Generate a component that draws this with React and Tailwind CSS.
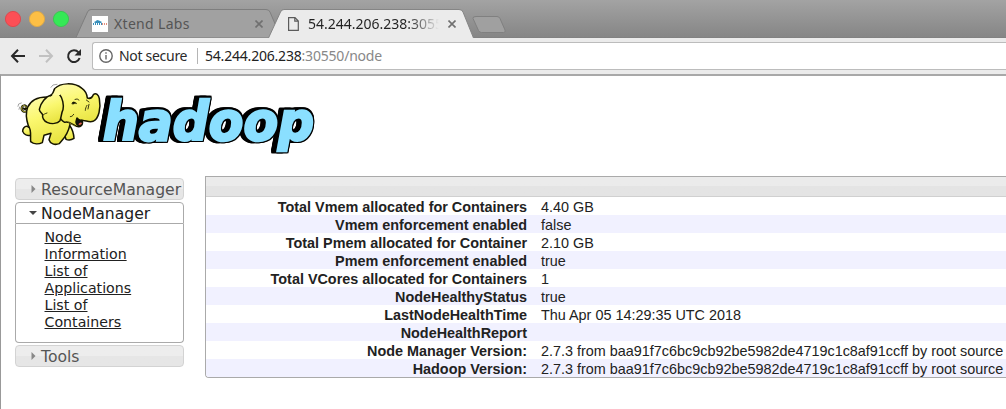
import React from "react";

const rows = [
  ["Total Vmem allocated for Containers", "4.40 GB"],
  ["Vmem enforcement enabled", "false"],
  ["Total Pmem allocated for Container", "2.10 GB"],
  ["Pmem enforcement enabled", "true"],
  ["Total VCores allocated for Containers", "1"],
  ["NodeHealthyStatus", "true"],
  ["LastNodeHealthTime", "Thu Apr 05 14:29:35 UTC 2018"],
  ["NodeHealthReport", ""],
  ["Node Manager Version:", "2.7.3 from baa91f7c6bc9cb92be5982de4719c1c8af91ccff by root source"],
  ["Hadoop Version:", "2.7.3 from baa91f7c6bc9cb92be5982de4719c1c8af91ccff by root source"],
];

function Close() {
  return (
    <svg className="h-[8px] w-[8px] shrink-0" viewBox="0 0 8 8" stroke="#707070" strokeWidth="1.6">
      <path d="M0.5 0.5 7.5 7.5M7.5 0.5 0.5 7.5" />
    </svg>
  );
}

function TabStrip() {
  return (
    <div className="relative flex h-[38px] bg-linear-to-b from-[#a3a3a3] to-[#858585]">
      <svg className="absolute inset-0" width="1006" height="38" viewBox="0 0 1006 38">
        <circle cx="13" cy="19" r="7.6" fill="#fc4f56" stroke="#df484e" />
        <circle cx="37" cy="19" r="7.6" fill="#fdbf45" stroke="#dca94a" />
        <circle cx="61" cy="19" r="7.6" fill="#35e956" stroke="#3cc653" />
        <path d="M76 37.5 87.5 12Q88.600 9.500 91 9.500H266Q269 9.500 270 12L281 38" fill="#a1a1a1" stroke="#7e7e7e" />
        <path d="M0 37.500H1006" stroke="#7d7d7d" strokeOpacity=".5" />
        <path d="M268.500 38 280.500 12Q281.500 9.500 284 9.500H459Q462 9.500 463 12L473.500 38" fill="#ebebeb" stroke="#858585" />
        <path d="M476 16.500H497Q499 16.500 500 18.500L505 30Q506 32.500 503.500 32.500H481.500Q479.500 32.500 478.500 30.500L473 18.500Q472.500 16.500 476 16.500Z" fill="#a0a0a0" stroke="#808080" />
      </svg>
      <div className="relative flex w-[263px] items-center pt-[10px] pl-[92px]">
        <svg className="h-4 w-4 shrink-0" viewBox="0 0 16 16">
          <path fill="#fff" d="M0 0h16v16H0z" />
          <path fill="#388fbb" d="M2 6 4 5 5 4 7 4.500 8 5 10 6 9 7H3ZM1 7h1v2H1zM3 7h1v2H3zM5 7h1v2H5zM7 7h1v2H7zM9 7h1v2H9z" />
          <path fill="#e48f7c" d="M10 7h1v2h-1zM12 7h1v2h-1zM14 7h1v2h-1z" />
        </svg>
        <span className="ml-[6px] w-[141px] text-[14px] leading-[18px] tracking-[0.32px] text-[#555]">Xtend Labs</span>
        <Close />
      </div>
      <div className="relative flex w-[200px] items-center pt-[10px] pl-[25px]">
        <svg className="h-[14px] w-[11px] shrink-0" viewBox="0 0 11 14" fill="none" stroke="#5b5b5b" strokeWidth="1.2">
          <path d="M.6.6H7L10.300 4V13.400H.6ZM6.800.8V4.200H10" />
        </svg>
        <span className="mr-[9px] ml-[9px] w-[131px] overflow-hidden bg-linear-to-r from-[#222] from-75% to-[#ebebeb] bg-clip-text text-[14px] leading-[18px] whitespace-nowrap text-transparent">54.244.206.238:30550</span>
        <Close />
      </div>
    </div>
  );
}

function Toolbar() {
  return (
    <div className="flex h-[36px] items-center bg-[#ebebeb] pl-[10px]">
      <svg className="h-[16px] w-[74px] shrink-0" viewBox="0 0 74 16" fill="none" strokeWidth="2">
        <path stroke="#292929" d="M15 8H2.500M8 1.700 2 8 8 14.300" />
        <path stroke="#c1c1c1" d="M29 8H41.500M36 1.700 42 8 36 14.300" />
        <path stroke="#292929" d="M68.500 4.300A5.900 5.900 0 1 0 69.600 10" />
        <path fill="#292929" d="M71 1V7.500H64.500Z" />
      </svg>
      <div className="ml-2 flex h-[28px] flex-1 items-center rounded-l-[3px] border border-r-0 border-[#bcbcbc] bg-white text-[14px] leading-5 whitespace-nowrap">
        <svg className="ml-[6px] h-[14px] w-[14px] shrink-0" viewBox="0 0 14 14" fill="none" stroke="#666" strokeWidth="1.400">
          <circle cx="7" cy="7" r="6.200" />
          <path d="M7 6V10.500M7 3.300V4.800" />
        </svg>
        <span className="ml-[6px] w-[70px] tracking-[-0.3px] text-[#2a2a2a]">Not secure</span>
        <span className="mr-[7px] ml-[8px] h-4 w-px bg-[#b5b5b5]" />
        <span className="tracking-[-0.2px] text-[#222]">54.244.206.238<span className="text-[#888]">:30550/node</span></span>
      </div>
    </div>
  );
}

function Logo() {
  return (
    <svg className="h-[85px] w-[320px] overflow-visible" viewBox="0 0 320 85">
      <defs>
        <linearGradient id="skin" x1="0" y1="0" x2="0.300" y2="1">
          <stop offset="0" stopColor="#fffcae" />
          <stop offset=".5" stopColor="#faf76e" />
          <stop offset="1" stopColor="#eae545" />
        </linearGradient>
      </defs>
      <text
        x="93" y="63.500" textLength="211" lengthAdjust="spacingAndGlyphs"
        className="fill-[#8adfff] stroke-[#8adfff] font-['DejaVu_Sans'] text-[54px] font-bold italic [filter:drop-shadow(1.5px_0_#000)_drop-shadow(-5px_0_#000)_drop-shadow(0_1.5px_#000)_drop-shadow(0_-1.5px_#000)] [stroke-linejoin:miter] [stroke-width:2.5px]"
      >hadoop</text>
      <g transform="scale(.33333)" fill="url(#skin)" stroke="#161500" strokeWidth="4.500" strokeLinejoin="round" strokeLinecap="round">
        <path d="M52 104C43 111 33 105 35 95C37 86 48 86 49 94C50 99 43 101 41 97" fill="none" strokeWidth="6" />
        <path d="M52 104C43 111 33 105 35 95C37 86 48 86 49 94" fill="none" stroke="#eee84e" strokeWidth="2" />
        <path d="M52 151C43 150 38 158 38 166C42 176 52 181 64 177L70 162Z" />
        <path d="M157 156 168 190C176 193 186 191 192 187C191 173 188 161 180 150Z" />
        <path d="M120 63C87 61 62 72 53 94C46 112 51 137 55 149C66 164 60 180 62 197C71 205 86 205 97 200L102 178 123 172 117 191C121 204 134 208 148 203C158 190 173 180 180 145L182 85Z" />
        <path d="M134 38C151 20 192 18 216 37C226 44 231 56 232 66C240 69 247 64 250 56C258 50 266 56 268 68C273 95 267 129 249 136C236 140 225 132 217 134C220 148 210 155 200 151C184 144 176 134 164 139C148 132 137 105 129 62Z" />
        <path d="M125 57C108 60 91 81 88 100C88 108 96 111 98 117C96 124 102 136 111 139C126 145 142 143 150 134C154 125 154 110 159 101C162 87 158 66 148 55" />
        <path d="M125 57 134 38 150 35 151 57Z" stroke="none" fill="#fffba4" />
        <path d="M122 59Q129 53 134 38" fill="none" />
        <path d="M201 126C199 135 193 140 204 148C212 153 220 146 216 132C210 134 205 131 201 126Z" fill="#111" />
        <path d="M208 142Q213 137 216 142Q211 150 205 145Z" fill="#e0604e" stroke="none" />
        <path d="M185 82Q189 75 196 79L201 83Q193 81 189 85Z" fill="#161500" strokeWidth="1" />
        <path d="M195 70Q202 66 207 72M229 72 237 78M231 88C228 93 226 98 226 103M237 85 234 99" fill="none" strokeWidth="2.500" />
        <path d="M191 115C188 120 185 122 181 122M111 111C105 113 101 115 98 118" fill="none" strokeWidth="2.500" />
        <path d="M123 34 129 27 141 25M24 91 26 84 34 81M27 100 29 93" fill="none" stroke="#777" strokeWidth="2" />
        <path d="M174 137C181 143 188 147 196 151" fill="none" stroke="#a49b20" strokeWidth="2" />
      </g>
    </svg>
  );
}

function MenuHeader({ label, open }) {
  const look = open
    ? "rounded-t-[4px] border-[#aaa] bg-white text-[#212121]"
    : "rounded-[4px] border-[#d3d3d3] bg-linear-to-b from-[#ededed] from-50% to-[#e6e6e6] to-50% text-[#555]";
  return (
    <div className={"flex h-[22px] items-center border pl-[12.500px] text-[15.640px] leading-5 whitespace-nowrap " + look}>
      <svg className="mr-[4.500px] h-2 w-2 shrink-0" viewBox="0 0 8 8" fill={open ? "#454545" : "#888"}>
        <path d={open ? "M0 2H8L4 6Z" : "M2.500 0V8L6.500 4Z"} />
      </svg>
      <span className="pt-[2px]">{label}</span>
    </div>
  );
}

function Sidebar() {
  return (
    <nav className="flex w-[169px] shrink-0 flex-col gap-[2px] pt-[2px] font-['DejaVu_Sans',sans-serif]">
      <MenuHeader label="ResourceManager" />
      <div>
        <MenuHeader label="NodeManager" open />
        <ul className="h-[119px] rounded-b-[4px] border border-t-0 border-[#aaa] pt-[5px] pl-[28.500px] text-[14.200px] leading-[17px] text-[#212121]">
          <li className="w-[95px] underline">Node Information</li>
          <li className="w-[95px] underline">List of Applications</li>
          <li className="w-[95px] underline">List of Containers</li>
        </ul>
      </div>
      <MenuHeader label="Tools" />
    </nav>
  );
}

export default function App() {
  return (
    <div className="flex h-[409px] w-[1006px] flex-col overflow-hidden bg-white font-['Noto_Sans',sans-serif]">
      <TabStrip />
      <Toolbar />
      <main className="flex-1 border-t-2 border-l border-t-[#a8a8a8] border-l-[#999]">
        <div className="h-[100px] pl-[9px]"><Logo /></div>
        <div className="flex gap-[21px] pl-[14px]">
          <Sidebar />
          <div className="w-[801px] shrink-0 overflow-hidden rounded-bl-[4px] border border-r-0 border-[#aaa] font-['Liberation_Sans',sans-serif] text-[14.400px] leading-[18px] text-[#222]">
            <div className="h-[20px] border-b border-[#d0d0d0] bg-linear-to-b from-[#ebebeb] from-50% to-[#e4e4e4] to-50%" />
            {rows.map(([label, value], i) => (
              <div key={label} className={"flex h-[18px] pt-px whitespace-nowrap " + (i % 2 ? "bg-[#f1f1ff]" : "bg-white")}>
                <div className="w-[321px] shrink-0 text-right font-bold">{label}</div>
                <div className="pl-[14px]">{value}</div>
              </div>
            ))}
          </div>
        </div>
      </main>
    </div>
  );
}
